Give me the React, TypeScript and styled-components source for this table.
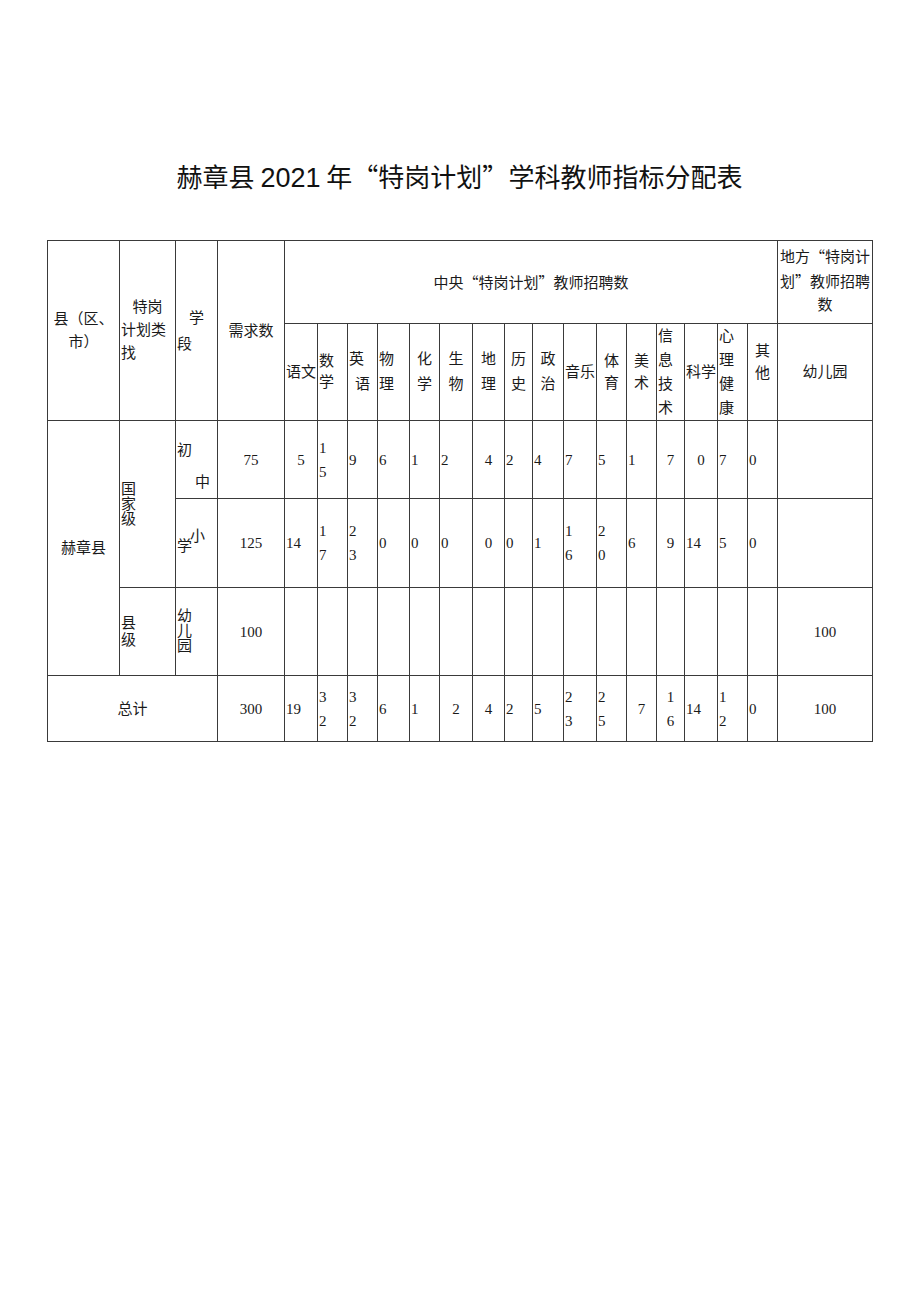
import styled, { createGlobalStyle } from 'styled-components';

type Align = 'left' | 'center';
type Val = { v: string; a?: Align };
type Head = { lines: [string, Align][]; lh?: number; pb?: number };

const GlobalStyle = createGlobalStyle`
  html, body {
    margin: 0;
    padding: 0;
    background: #ffffff;
  }
  body {
    font-family: "Liberation Serif", "Noto Sans CJK SC", serif;
    color: #1a1a1a;
  }
`;

const cols = [72, 56, 42, 67, 33, 30, 30, 32, 30, 33, 32, 28, 31, 33, 30, 30, 28, 33, 30, 30, 95];

const subjects: Head[] = [
    { lines: [['语文', 'left']] },
    { lines: [['数', 'left'], ['学', 'left']], lh: 21 },
    { lines: [['英', 'left'], ['语', 'center']], lh: 25 },
    { lines: [['物', 'left'], ['理', 'left']], lh: 25 },
    { lines: [['化', 'center'], ['学', 'center']], lh: 25 },
    { lines: [['生', 'center'], ['物', 'center']], lh: 25 },
    { lines: [['地', 'center'], ['理', 'center']], lh: 25 },
    { lines: [['历', 'center'], ['史', 'center']], lh: 25 },
    { lines: [['政', 'center'], ['治', 'center']], lh: 25 },
    { lines: [['音乐', 'left']] },
    { lines: [['体', 'center'], ['育', 'center']], lh: 22 },
    { lines: [['美', 'center'], ['术', 'center']], lh: 22 },
    { lines: [['信', 'left'], ['息', 'left'], ['技', 'left'], ['术', 'left']], lh: 24 },
    { lines: [['科学', 'left']] },
    { lines: [['心', 'left'], ['理', 'left'], ['健', 'left'], ['康', 'left']], lh: 24 },
    { lines: [['其', 'center'], ['他', 'center']], lh: 22, pb: 20 },
];

// 初中 / 小学 / 总计 rows, one entry per subject column
const juniorRow: Val[] = [
    { v: '5', a: 'center' }, { v: '1\n5' }, { v: '9' }, { v: '6' }, { v: '1' }, { v: '2' },
    { v: '4', a: 'center' }, { v: '2' }, { v: '4' }, { v: '7' }, { v: '5' }, { v: '1' },
    { v: '7', a: 'center' }, { v: '0', a: 'center' }, { v: '7' }, { v: '0' },
];

const primaryRow: Val[] = [
    { v: '14' }, { v: '1\n7' }, { v: '2\n3' }, { v: '0' }, { v: '0' }, { v: '0' },
    { v: '0', a: 'center' }, { v: '0' }, { v: '1' }, { v: '1\n6' }, { v: '2\n0' }, { v: '6' },
    { v: '9', a: 'center' }, { v: '14' }, { v: '5' }, { v: '0' },
];

const totalRow: Val[] = [
    { v: '19' }, { v: '3\n2' }, { v: '3\n2' }, { v: '6' }, { v: '1' }, { v: '2', a: 'center' },
    { v: '4', a: 'center' }, { v: '2' }, { v: '5' }, { v: '2\n3' }, { v: '2\n5' }, { v: '7', a: 'center' },
    { v: '1\n6', a: 'center' }, { v: '14' }, { v: '1\n2' }, { v: '0' },
];

function ValueCells({ row }: { row: Val[] }) {
    return (
        <>
            {row.map((c, i) => (
                <Cell key={i} $a={c.a ?? 'left'}>
                    {c.v.includes('\n') ? (
                        <Lines $lh={24}>
                            {c.v.split('\n').map((l, j) => <Line key={j}>{l}</Line>)}
                        </Lines>
                    ) : c.v}
                </Cell>
            ))}
        </>
    );
}

export default function App() {
    return (
        <Page>
            <GlobalStyle />
            <Title>
                赫章县 <Num>2021</Num> 年<Cjk>“</Cjk>特岗计划<Cjk>”</Cjk>学科教师指标分配表
            </Title>

            <Sheet>
                <colgroup>
                    {cols.map((w, i) => <col key={i} style={{ width: w }} />)}
                </colgroup>
                <tbody>
                    <Row $h={83}>
                        <Cell rowSpan={2}>
                            <Lines $lh={23}>
                                <Line $a="center">县（区、</Line>
                                <Line $a="center">市）</Line>
                            </Lines>
                        </Cell>
                        <Cell rowSpan={2}>
                            <Lines $lh={23}>
                                <Line $a="center">特岗</Line>
                                <Line $a="left">计划类</Line>
                                <Line $a="left">找</Line>
                            </Lines>
                        </Cell>
                        <Cell rowSpan={2}>
                            <Lines $lh={26}>
                                <Line $a="center">学</Line>
                                <Line $a="left">段</Line>
                            </Lines>
                        </Cell>
                        <Cell rowSpan={2}>需求数</Cell>
                        <Cell colSpan={16}>
                            <Cjk>中央“特岗计划”教师招聘数</Cjk>
                        </Cell>
                        <Cell>
                            <Lines $lh={23} $pb={4}>
                                <Line $a="center"><Cjk>地方“特岗计</Cjk></Line>
                                <Line $a="center"><Cjk>划”教师招聘</Cjk></Line>
                                <Line $a="center">数</Line>
                            </Lines>
                        </Cell>
                    </Row>

                    <Row $h={97}>
                        {subjects.map((s, i) => (
                            <Cell key={i}>
                                {s.lines.length === 1 ? (
                                    <Line $a={s.lines[0][1]}>{s.lines[0][0]}</Line>
                                ) : (
                                    <Lines $lh={s.lh} $pb={s.pb}>
                                        {s.lines.map(([t, a], j) => <Line key={j} $a={a}>{t}</Line>)}
                                    </Lines>
                                )}
                            </Cell>
                        ))}
                        <Cell>幼儿园</Cell>
                    </Row>

                    <Row $h={78}>
                        <Cell rowSpan={3}>赫章县</Cell>
                        <Cell rowSpan={2} $a="left">
                            <Lines $lh={15}>
                                <Line>国</Line>
                                <Line>家</Line>
                                <Line>级</Line>
                            </Lines>
                        </Cell>
                        <Cell $a="left">
                            <Lines $lh={32} $pt={12}>
                                <Line>初</Line>
                                <Line $indent={18}>中</Line>
                            </Lines>
                        </Cell>
                        <Cell>75</Cell>
                        <ValueCells row={juniorRow} />
                        <Cell />
                    </Row>

                    <Row $h={89}>
                        <Cell $a="left">
                            <Raised>
                                <span>小</span>
                                <span>学</span>
                            </Raised>
                        </Cell>
                        <Cell>125</Cell>
                        <ValueCells row={primaryRow} />
                        <Cell />
                    </Row>

                    <Row $h={88}>
                        <Cell $a="left">
                            <Lines $lh={17}>
                                <Line>县</Line>
                                <Line>级</Line>
                            </Lines>
                        </Cell>
                        <Cell $a="left">
                            <Lines $lh={15}>
                                <Line>幼</Line>
                                <Line>儿</Line>
                                <Line>园</Line>
                            </Lines>
                        </Cell>
                        <Cell>100</Cell>
                        {subjects.map((_, i) => <Cell key={i} />)}
                        <Cell>100</Cell>
                    </Row>

                    <Row $h={66}>
                        <Cell colSpan={3}>总计</Cell>
                        <Cell>300</Cell>
                        <ValueCells row={totalRow} />
                        <Cell>100</Cell>
                    </Row>
                </tbody>
            </Sheet>
        </Page>
    );
}

const Page = styled.div`
  width: 920px;
  min-height: 1301px;
  box-sizing: border-box;
  padding: 158px 48px 0 47px;
  background: #ffffff;
`;

const Title = styled.h1`
  margin: 0 0 44px;
  font-family: "Noto Sans CJK SC", sans-serif;
  font-size: 26px;
  font-weight: 400;
  line-height: 36px;
  text-align: center;
  color: #111;
  white-space: pre;
`;

const Num = styled.span`
  font-family: "Liberation Sans", sans-serif;
  font-size: 27px;
`;

const Sheet = styled.table`
  width: 825px;
  table-layout: fixed;
  border-collapse: collapse;
  font-size: 15px;
`;

const Row = styled.tr<{ $h: number }>`
  height: ${p => p.$h}px;
`;

const Cell = styled.td<{ $a?: Align }>`
  border: 1px solid #3a3a3a;
  padding: 0 1px;
  text-align: ${p => p.$a ?? 'center'};
  vertical-align: middle;
  line-height: 24px;
  white-space: nowrap;
  overflow: hidden;
`;

const Lines = styled.div<{ $lh?: number; $pt?: number; $pb?: number }>`
  display: flex;
  flex-direction: column;
  line-height: ${p => p.$lh ?? 24}px;
  padding-top: ${p => p.$pt ?? 0}px;
  padding-bottom: ${p => p.$pb ?? 0}px;
`;

const Line = styled.span<{ $a?: Align; $indent?: number }>`
  display: block;
  text-align: ${p => p.$a ?? 'inherit'};
  padding-left: ${p => p.$indent ?? 0}px;
`;

const Cjk = styled.span`
  font-family: "Noto Sans CJK SC", sans-serif;
  font-feature-settings: "fwid";
`;

const Raised = styled.span`
  display: inline-flex;
  flex-direction: row-reverse;
  align-items: flex-end;
  line-height: 16px;

  span:first-child {
    padding-bottom: 10px;
    margin-left: -2px;
  }
`;
